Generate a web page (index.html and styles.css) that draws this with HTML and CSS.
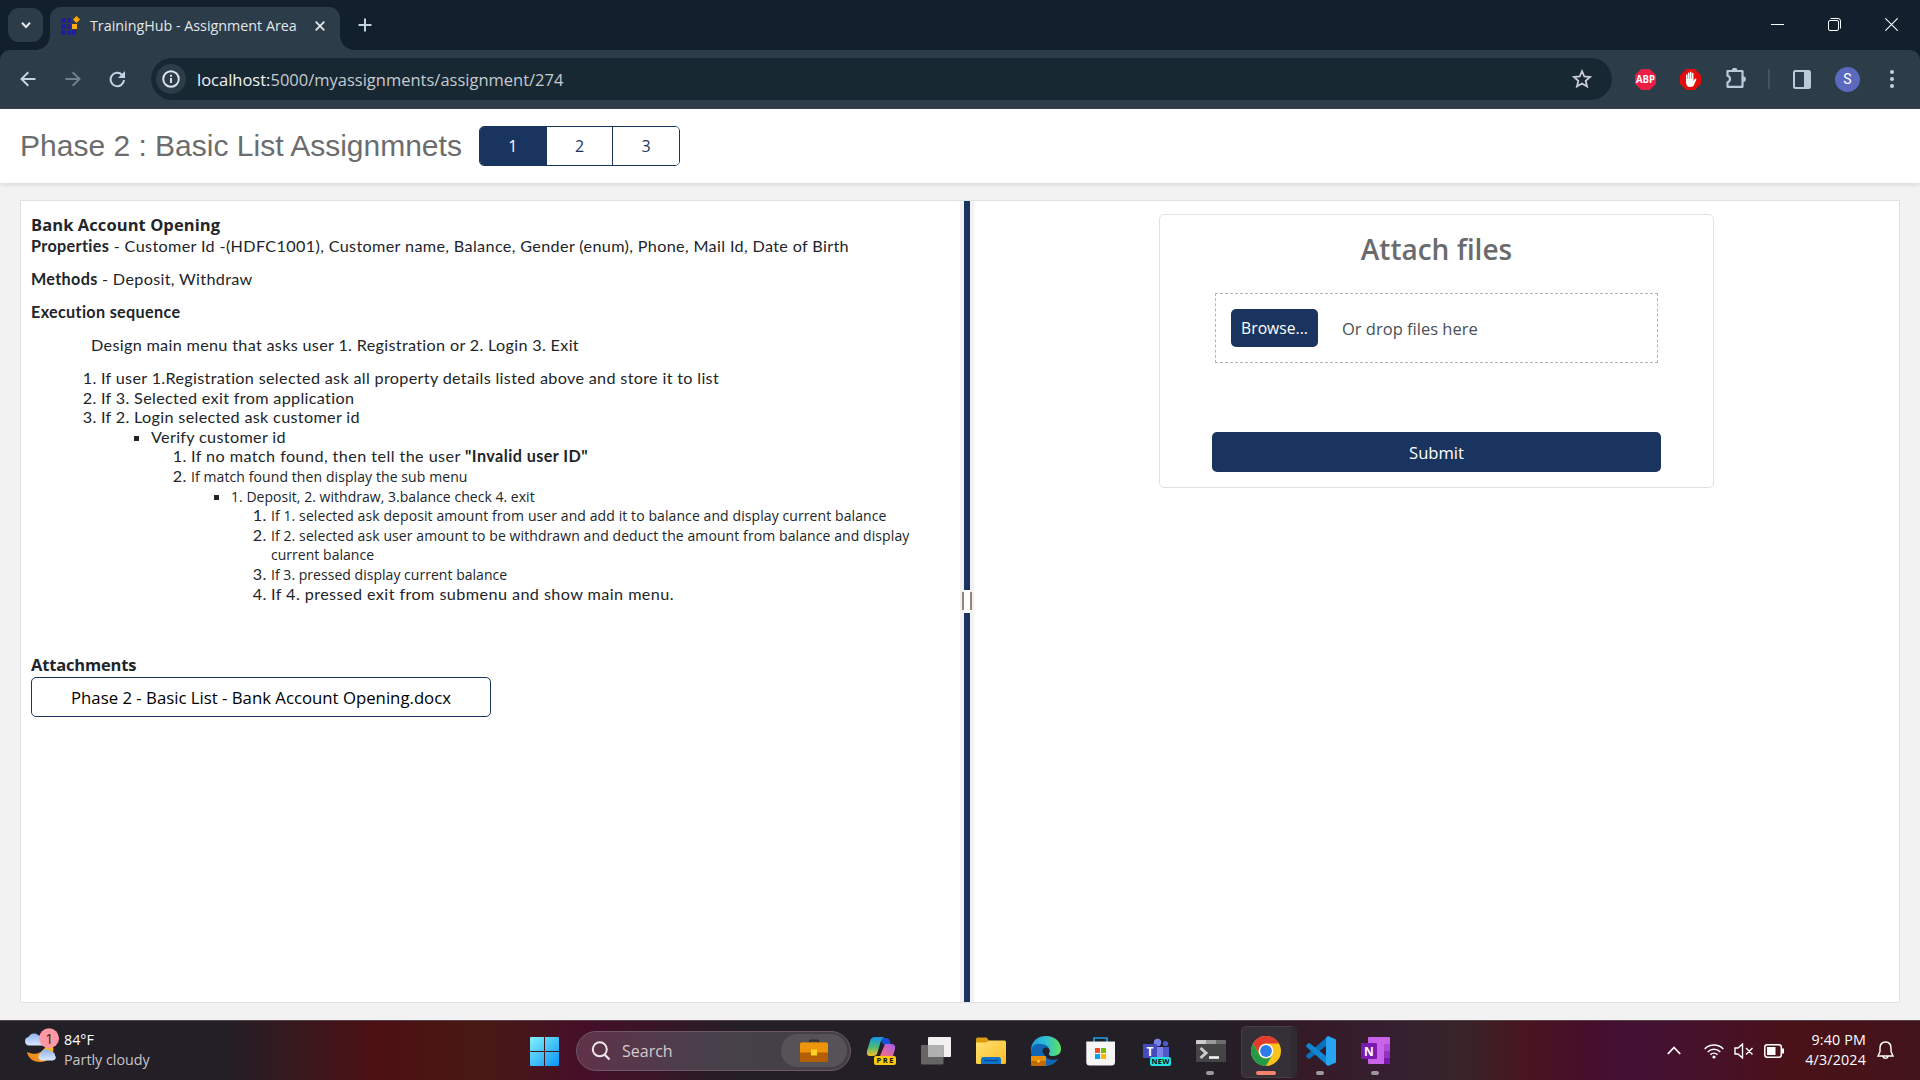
FILE: index.html
```html
<!DOCTYPE html>
<html lang="en">
<head>
<meta charset="utf-8">
<title>TrainingHub - Assignment Area</title>
<link rel="stylesheet" href="styles.css">
</head>
<body>
<div class="screen">
  <header class="tabstrip">
    <button class="tab-search"><svg width="10" height="10" viewBox="0 0 10 10"><path d="M1 2.8 5 7l4-4.2" fill="none" stroke="#e3e8ec" stroke-width="2"/></svg></button>
    <div class="tab">
      <svg class="favicon" width="19" height="19" viewBox="0 0 19 19"><path d="M0 2h5v5H0zM6 2h4v5H6zM0 8h5v5H0zM6 8h4v5H6zM0 14h5v5H0zM6 14h4v5H6zM11 14h4v5h-4z" fill="#232096"/><path d="M11 8h5v5h-5z" fill="#ffa90a"/><path d="m15.500 0 3.500 3.500-3.500 3.500L12 3.500z" fill="#ffa90a"/></svg>
      <span class="tab-title">TrainingHub - Assignment Area</span>
      <svg class="tab-close" width="10" height="10" viewBox="0 0 10 10"><path d="m.7.700 8.600 8.600M9.300.7.700 9.300" stroke="#e6eaed" stroke-width="1.700"/></svg>
    </div>
    <svg class="new-tab" width="14" height="14" viewBox="0 0 14 14"><path d="M7 .5v13M.5 7h13" stroke="#c3d3e3" stroke-width="2"/></svg>
    <div class="window-controls">
      <svg width="13" height="13" viewBox="0 0 13 13"><path d="M0 6.500h13" stroke="#fff"/></svg>
      <svg width="13" height="13" viewBox="0 0 13 13" fill="none" stroke="#fff"><rect x=".5" y="2.500" width="10" height="10" rx="1.500"/><path d="M2.500.5H10A2.500 2.500 0 0 1 12.500 3v7.500"/></svg>
      <svg width="13" height="13" viewBox="0 0 13 13"><path d="m.3.300 12.400 12.400M12.700.3.300 12.700" stroke="#fff" stroke-width="1.100"/></svg>
    </div>
  </header>

  <nav class="toolbar">
    <svg class="back" width="16" height="16" viewBox="0 0 16 16" fill="none" stroke="#c3d3e3" stroke-width="2"><path d="M15.500 8H2M8.300 1.200 1.500 8l6.800 6.800"/></svg>
    <svg class="forward" width="16" height="16" viewBox="0 0 16 16" fill="none" stroke="#73818c" stroke-width="2"><path d="M.5 8H14M7.700 1.200 14.500 8l-6.800 6.800"/></svg>
    <svg class="reload" width="17" height="17" viewBox="0 0 17 17"><path d="M15 9a6.700 6.700 0 1 1-2-5.300L15 5.700" fill="none" stroke="#c3d3e3" stroke-width="2"/><path d="M16 0v7H9z" fill="#c3d3e3"/></svg>
    <div class="omnibox">
      <span class="site-info"><svg width="18" height="18" viewBox="0 0 18 18"><circle cx="9" cy="9" r="7.800" fill="none" stroke="#dfe5ea" stroke-width="1.900"/><path d="M9 8v5M9 4.700v2" stroke="#dfe5ea" stroke-width="1.900"/></svg></span>
      <span class="url"><b>localhost:</b>5000/myassignments/assignment/274</span>
      <svg class="star" width="20" height="20" viewBox="0 0 20 20"><path d="m10 2.200 2.300 5.300 5.700.5-4.300 3.800 1.300 5.700-5-3-5 3 1.300-5.700L2 8l5.700-.5z" fill="none" stroke="#c8ced3" stroke-width="1.800"/></svg>
    </div>
    <div class="extensions">
      <svg class="abp" width="21" height="21" viewBox="0 0 21 21"><path d="M6.300 0h8.400L21 6.300v8.400L14.700 21H6.300L0 14.700V6.300z" fill="#ed1e45"/><text x="10.500" y="14" text-anchor="middle" textLength="19" lengthAdjust="spacingAndGlyphs" class="abp-text">ABP</text></svg>
      <svg class="block" width="21" height="21" viewBox="0 0 21 21"><path d="M6.300 0h8.400L21 6.300v8.400L14.700 21H6.300L0 14.700V6.300z" fill="#e40d0d"/><path d="M6 12V6.200c0-1.300 1.500-1.300 1.500 0V10h.4V4.500c0-1.400 1.600-1.400 1.600 0V10h.4V3.500c0-1.300 1.600-1.300 1.600 0V10h.4V4.700c0-1.300 1.600-1.300 1.600 0V12l1.200-2c.7-1 2-.5 1.500.7l-2 4.800c-.7 1.800-1.800 2.500-4 2.500-3 0-4.200-1.700-4.200-6" fill="#fff"/></svg>
      <svg class="puzzle" width="22" height="22" viewBox="0 0 22 22"><path d="M2.500 3h15v15.800h-15v-4.600a3.300 3.300 0 0 0 0-6.400z" fill="none" stroke="#b9cadb" stroke-width="2.200" stroke-linejoin="round"/><path d="M6.800 2.500a2.800 2.800 0 0 1 5.600 0zM18 8.200a2.900 2.900 0 0 1 0 5.800z" fill="#b9cadb"/></svg>
      <i class="divider"></i>
      <svg class="panel-icon" width="18" height="19" viewBox="0 0 18 19"><rect x="1" y="1" width="16" height="17" rx="1.500" fill="none" stroke="#b9cadb" stroke-width="2"/><path d="M11 1h6v17h-6z" fill="#b9cadb"/></svg>
      <span class="avatar">S</span>
      <svg class="menu" width="4" height="18" viewBox="0 0 4 18" fill="#c3d3e3"><circle cx="2" cy="2" r="2"/><circle cx="2" cy="9" r="2"/><circle cx="2" cy="16" r="2"/></svg>
    </div>
  </nav>

  <section class="page-head">
    <h1>Phase 2 : Basic List Assignmnets</h1>
    <div class="pager"><button class="active">1</button><button>2</button><button>3</button></div>
  </section>

  <main class="content">
    <div class="panels">
      <article class="task">
        <h2>Bank Account Opening</h2>
        <p class="properties"><b>Properties</b> - Customer Id -(HDFC1001), Customer name, Balance, Gender (enum), Phone, Mail Id, Date of Birth</p>
        <p><b>Methods</b> - Deposit, Withdraw</p>
        <p><b>Execution sequence</b></p>
        <p class="indent">Design main menu that asks user 1. Registration or 2. Login 3. Exit</p>
        <ol class="steps">
          <li>If user 1.Registration selected ask all property details listed above and store it to list</li>
          <li>If 3. Selected exit from application</li>
          <li>If 2. Login selected ask customer id
            <ul class="sub">
              <li>Verify customer id
                <ol>
                  <li><span class="wide">If no match found, then tell the user <b>"Invalid user ID"</b></span></li>
                  <li><span class="ui">If match found then display the sub menu</span>
                    <ul>
                      <li><span class="ui tight">1. Deposit, 2. withdraw, 3.balance check 4. exit</span>
                        <ol>
                          <li><span class="ui">If 1. selected ask deposit amount from user and add it to balance and display current balance</span></li>
                          <li><span class="ui">If 2. selected ask user amount to be withdrawn and deduct the amount from balance and display</span><br><span class="ui tight">current balance</span></li>
                          <li><span class="ui tight">If 3. pressed display current balance</span></li>
                          <li><span class="wide">If 4. pressed exit from submenu and show main menu.</span></li>
                        </ol>
                      </li>
                    </ul>
                  </li>
                </ol>
              </li>
            </ul>
          </li>
        </ol>
        <h2 class="attachments">Attachments</h2>
        <button class="file">Phase 2 - Basic List - Bank Account Opening.docx</button>
      </article>
      <div class="splitter"><i></i><span class="grip"></span><i></i></div>
      <section class="upload">
        <form class="card">
          <h3>Attach files</h3>
          <div class="dropzone"><button type="button" class="browse">Browse...</button><span class="hint">Or drop files here</span></div>
          <button type="button" class="submit">Submit</button>
        </form>
      </section>
    </div>
  </main>

  <footer class="taskbar">
    <div class="weather">
      <svg width="34" height="36" viewBox="0 0 34 36">
        <defs><linearGradient id="cl" x2="0" y2="1"><stop stop-color="#8db4f2"/><stop offset="1" stop-color="#d9e7fc"/></linearGradient><linearGradient id="mn" x1="1" x2="0" y2="1"><stop stop-color="#fbc02a"/><stop offset="1" stop-color="#ec7a1a"/></linearGradient></defs>
        <path d="M28 18c2 9-4 16-13 16C8 34 3 30 2 24c9 4 15 1 19-6z" fill="url(#mn)"/>
        <path d="M4 17.500a4.300 4.300 0 0 1-.5-8.500 6 6 0 0 1 10-1.500c4 0 6 3 5 10z" fill="url(#cl)"/>
        <path d="M16 32.500a4 4 0 0 1 0-7.500 5.500 5.500 0 0 1 10-1c3-.3 4 1 4 3.500 2 2 0 5-2.500 5z" fill="url(#cl)"/>
        <circle cx="24" cy="10.300" r="10" fill="#ff98a4"/><text x="24.200" y="15.500" text-anchor="middle" class="badge">1</text>
      </svg>
      <p>84°F<br><span class="dim">Partly cloudy</span></p>
    </div>
    <div class="apps">
      <span class="app"><svg width="30" height="30" viewBox="0 0 30 30"><defs><linearGradient id="w" x2="1" y2="1"><stop stop-color="#80f2fc"/><stop offset="1" stop-color="#0a94f8"/></linearGradient></defs><path d="M0 2q0-1 1-1h13v14H0zM15 1h13q1 0 1 1v13H15zM0 16h14v14H1q-1 0-1-1zM15 16h14v13q0 1-1 1H15z" fill="url(#w)"/></svg></span>
      <div class="search">
        <svg width="20" height="20" viewBox="0 0 20 20"><circle cx="8.800" cy="8.300" r="7" fill="none" stroke="#efe7eb" stroke-width="2"/><path d="m13.500 13.500 5 5" stroke="#efe7eb" stroke-width="2.400"/></svg>
        <span class="search-label">Search</span>
        <span class="brief"><svg width="28" height="24" viewBox="0 0 28 24"><path d="M10 4V2.500q0-1 1-1h6q1 0 1 1V4" fill="none" stroke="#2e2e30" stroke-width="2"/><rect y="3.500" width="28" height="19.500" rx="1.500" fill="#b45f04"/><path d="M0 5q0-1.500 1.500-1.500h25Q28 3.500 28 5v8.500H0z" fill="#ee9408"/><path d="M11 10.500h6v6h-6z" fill="#fcd226"/></svg></span>
      </div>
      <span class="app"><svg width="30" height="30" viewBox="0 0 30 30"><defs><linearGradient id="c1" x2="0" y2="1"><stop stop-color="#1594e8"/><stop offset=".5" stop-color="#45b97c"/><stop offset="1" stop-color="#f5c01f"/></linearGradient><linearGradient id="c2" x1="1" x2="0" y2="1"><stop stop-color="#a45cf2"/><stop offset="1" stop-color="#fb7076"/></linearGradient></defs><path d="M13 2h7q3 0 4 3l1 4h-7z" fill="#1a50d8"/><path d="M9 1h9q-3 2-4 7l-3 10q-1 2-4 2H4q-4 0-3-5L4 5q1-4 5-4" fill="url(#c1)"/><path d="M19 8h6q5 0 4 5l-2 7H14z" fill="url(#c2)"/><rect x="8" y="20" width="22" height="9" rx="2" fill="#fdc810"/><text x="19" y="27.400" text-anchor="middle" textLength="17" class="tag">PRE</text></svg></span>
      <span class="app"><svg width="32" height="30" viewBox="0 0 32 30"><rect x="8" y="1" width="23" height="20" rx="1" fill="#f0f0f0"/><rect x="1" y="9" width="22.500" height="19.500" rx="1" fill="#656565"/><path d="M8 9h15.500v12H8z" fill="#b0b0b0"/></svg></span>
      <span class="app"><svg width="30" height="30" viewBox="0 0 30 30"><defs><linearGradient id="f" x2="1" y2="1"><stop stop-color="#ffe070"/><stop offset="1" stop-color="#fdbd28"/></linearGradient></defs><path d="M0 3q0-1.500 1.500-1.500h9L13 4.500V9H0z" fill="#dc9b0c"/><path d="M0 6.500h10.500L13 4.500h15.500Q30 4.500 30 6v20.500q0 1.500-1.500 1.500h-27Q0 28 0 26.500z" fill="url(#f)"/><path d="M5 28v-4.500q0-2.500 2.500-2.500h15q2.500 0 2.500 2.500V28z" fill="#0d74c8"/><path d="M8 24.500h14" stroke="#0a4f94" stroke-width="1.500"/></svg></span>
      <span class="app"><svg width="30" height="30" viewBox="0 0 30 30"><defs><linearGradient id="e" x2="1"><stop stop-color="#1f9fe0"/><stop offset=".5" stop-color="#2fc0d5"/><stop offset="1" stop-color="#5fe25b"/></linearGradient></defs><path d="M0 17C-1 6 6 0 15 0c10 0 15 7 15 13 0 5-4 7-8 7-3 0-5-1-4-3 2-4-2-7-6-6-6 1-6 7-12 6" fill="url(#e)"/><path d="M0 15c1-6 5-8 10-7 5 0 8 3 8 5-3-2-6 1-5 4 1 6 8 8 14 6-3 5-8 7-13 7C6 30 0 24 0 15" fill="#1267b5"/><circle cx="15" cy="15" r="3.500" fill="#23202a"/><rect y="20" width="15" height="10" rx=".8" fill="#c26b05"/><path d="M0 20h15v5H0z" fill="#e88e0b"/><circle cx="7.500" cy="25.200" r="1.300" fill="#fcd226"/></svg></span>
      <span class="app"><svg width="30" height="30" viewBox="0 0 30 30"><path d="M8 7V2h13v5" fill="none" stroke="#1f9fe6" stroke-width="1.700"/><path d="M.3 5.500H29V26q0 3.500-3.500 3.500h-22Q.3 29.500.3 26z" fill="#f6f6f6"/><path d="M9 12h5v5H9z" fill="#f04e24"/><path d="M15 12h5v5h-5z" fill="#7db900"/><path d="M9 18h5v5H9z" fill="#06a2ec"/><path d="M15 18h5v5h-5z" fill="#fdb700"/></svg></span>
      <span class="app"><svg width="30" height="30" viewBox="0 0 30 30"><circle cx="16.500" cy="6.500" r="3.700" fill="#7b83eb"/><circle cx="24.500" cy="7.500" r="2.600" fill="#5059c9"/><path d="M13 11h11v13H13z" fill="#7b83eb"/><path d="M22 11h6v11h-6z" fill="#5059c9"/><rect x="2" y="8" width="14" height="14" rx="1" fill="#444bbf"/><text x="9" y="19.500" text-anchor="middle" class="letter">T</text><rect x="9" y="21" width="21" height="9" rx="2" fill="#25e2e5"/><text x="19.500" y="28.400" text-anchor="middle" textLength="18" class="tag">NEW</text></svg></span>
      <span class="app running"><svg width="30" height="30" viewBox="0 0 30 30"><rect y="4" width="30" height="22" rx="1" fill="#454545"/><path d="M0 8V5q0-1 1-1h9v4z" fill="#cbcbcb"/><path d="M10 4h10v4H10z" fill="#999"/><path d="M20 4h9q1 0 1 1v3H20z" fill="#6d6d6d"/><path d="m4.500 12 5.500 5-5.500 5" fill="none" stroke="#ccc" stroke-width="3"/><path d="M13 21.500h10" stroke="#f4f4f4" stroke-width="2.600"/></svg></span>
      <span class="app current"><svg width="30" height="30" viewBox="0 0 30 30"><circle cx="15" cy="15" r="15" fill="#fcc31d"/><path d="M2 7.500A15 15 0 0 1 28 7.500H15A7.500 7.500 0 0 0 8.500 18.700z" fill="#e33b2e"/><path d="M2 7.500 8.500 18.700A7.500 7.500 0 0 0 21.500 18.700L15 30A15 15 0 0 1 2 7.500" fill="#259b4a"/><circle cx="15" cy="15" r="7.300" fill="#fff"/><circle cx="15" cy="15" r="5.900" fill="#2f7be9"/></svg></span>
      <span class="app running"><svg width="30" height="30" viewBox="0 0 30 30"><path d="M22 0v8.500L4 22.500q-1 .8-2 0L.5 21q-1-1 0-2z" fill="#0a6fb9"/><path d="M22 30v-8.500L4 7.500q-1-.8-2 0L.5 9q-1 1 0 2z" fill="#1186cf"/><path d="M22 0 30 3.500v23L22 30q-2-1-2-3V3q0-2 2-3" fill="#27a5f0"/></svg></span>
      <span class="app running"><svg width="30" height="30" viewBox="0 0 30 30"><rect x="7" y="1" width="22" height="27" rx="1" fill="#c964e8"/><path d="M23 8h6v7h-6z" fill="#ae4bd5"/><path d="M23 15h6v7h-6z" fill="#9332bf"/><path d="M23 22h6v5q0 1-1 1h-5z" fill="#7719aa"/><rect y="7" width="16" height="16" rx="1.200" fill="#7a1ab0"/><text x="8" y="19.500" text-anchor="middle" class="letter">N</text></svg></span>
    </div>
    <div class="tray">
      <svg class="up" width="14" height="9" viewBox="0 0 14 9"><path d="m.8 8 6.200-6.500L13.200 8" fill="none" stroke="#fff" stroke-width="1.800"/></svg>
      <svg class="wifi" width="20" height="16" viewBox="0 0 20 16" fill="none" stroke="#fff" stroke-width="1.500"><path d="M.7 6a13 13 0 0 1 18.600 0M3.700 9a8.800 8.800 0 0 1 12.600 0M6.500 11.600a5 5 0 0 1 7 0"/><circle cx="10" cy="14" r="1.600" fill="#fff" stroke="none"/></svg>
      <svg class="mute" width="20" height="16" viewBox="0 0 20 16" fill="none" stroke="#fff" stroke-width="1.400"><path d="M1 5h3l4.500-4v14L4 11H1zM12 5l6.500 6.500M18.500 5 12 11.500"/></svg>
      <svg class="battery" width="20" height="14" viewBox="0 0 20 14"><rect x=".8" y=".8" width="16.500" height="12.400" rx="2.500" fill="none" stroke="#fff" stroke-width="1.500"/><path d="M3 3h8.500v8H3zM18 4.500h2v5h-2z" fill="#fff"/></svg>
      <p class="clock">9:40 PM<br>4/3/2024</p>
      <svg class="bell" width="17" height="19" viewBox="0 0 17 19" fill="none" stroke="#fff" stroke-width="1.400"><path d="M8.500 1C5 1 3 3.500 3 7v3.500L1 15h15l-2-4.500V7c0-3.500-2-6-5.500-6zM6 15.500a2.600 2.600 0 0 0 5 0"/></svg>
    </div>
  </footer>
</div>
</body>
</html>
```
FILE: styles.css
```css
* { box-sizing: border-box; }
body { margin: 0; font-family: "Open Sans", "Noto Sans", sans-serif; font-size: 15px; color: #212529; }
button { margin: 0; padding: 0; font: inherit; border: 0; }
h1, h2, h3, p, ol, ul { margin: 0; padding: 0; }
svg { display: block; flex: none; }
.screen { width: 1920px; height: 1080px; overflow: hidden; display: flex; flex-direction: column; background: #f2f2f2; white-space: nowrap; }

/* Browser tab strip */
.tabstrip { position: relative; z-index: 1; flex: none; height: 50px; display: flex; background: #11202c; padding-left: 8px; }
.tab-search { width: 35px; height: 34px; margin-top: 8px; border-radius: 11px; background: #2c3c49; display: flex; align-items: center; justify-content: center; }
.tab { position: relative; width: 290px; margin: 7px 0 0 7px; padding: 0 15px 6px 11px; border-radius: 11px 11px 0 0; background: #2c3c49; display: flex; align-items: center; color: #e2e7ea; }
.tab::before, .tab::after { content: ""; position: absolute; bottom: 0; width: 14px; height: 14px; }
.tab::before { left: -14px; background: radial-gradient(circle at 0 0, transparent 13.500px, #2c3c49 14px); }
.tab::after { right: -14px; background: radial-gradient(circle at 100% 0, transparent 13.500px, #2c3c49 14px); }
.tab-title { margin-left: 10px; font-size: 14.300px; }
.tab-close { margin-left: auto; }
.new-tab { margin: 18px 0 0 18px; }
.window-controls { margin: 18px 22px 0 auto; display: flex; gap: 44px; }

/* Browser toolbar */
.toolbar { flex: none; height: 59px; display: flex; align-items: center; background: #2c3c49; border-bottom: 1px solid #3a3f4a; border-radius: 10px 10px 0 0; padding-left: 20px; box-shadow: 0 -10px 0 #11202c; position: relative; z-index: 0; }
.forward { margin-left: 29px; }
.reload { margin-left: 28px; }
.omnibox { width: 1461px; height: 42px; margin-left: 25px; padding: 0 20px 0 5px; border-radius: 21px; background: #182833; display: flex; align-items: center; }
.site-info { width: 30px; height: 30px; border-radius: 50%; background: #2c3c49; display: grid; place-items: center; }
.url { margin-left: 11px; font-size: 16.500px; color: #c5cbd0; }
.url b { font-weight: 400; color: #eef1f3; }
.star { margin-left: auto; }
.extensions { display: flex; align-items: center; margin-left: 23px; }
.abp-text { font: bold 10px "Open Sans", sans-serif; fill: #fff; }
.block { margin-left: 24px; }
.puzzle { margin-left: 24px; }
.divider { width: 2px; height: 20px; margin-left: 21px; background: #44545f; }
.panel-icon { margin-left: 23px; }
.avatar { width: 25px; height: 25px; margin-left: 24px; border-radius: 50%; background: #5b69bf; color: #fff; font: 14px/25px Roboto, sans-serif; text-align: center; }
.menu { margin-left: 30px; }

/* Page heading */
.page-head { flex: none; height: 74px; display: flex; align-items: center; padding-left: 20px; background: #fff; box-shadow: 0 2px 4px rgba(0, 0, 0, .1); }
h1 { width: 441px; font: 400 30px "Liberation Sans", sans-serif; color: #6b6c6e; }
.pager { display: flex; margin-left: 18px; width: 201px; height: 40px; border: 1px solid #19355f; border-radius: 5px; overflow: hidden; }
.pager button { flex: 1; background: #fff; color: #19355f; border-left: 1px solid #19355f; font-size: 16px; }
.pager button:first-child { border-left: 0; }
.pager .active { background: #19355f; color: #fff; }

/* Assignment text */
.content { flex: 1; padding: 17px 20px; }
.panels { height: 803px; display: flex; border: 1px solid #dee2e6; background: #fff; }
.task { width: 939px; padding: 11px 0 0 10px; font-family: Lato, sans-serif; font-size: 16.200px; letter-spacing: .32px; }
.task h2 { margin-bottom: -1px; font: 700 16.500px/25px "Open Sans", sans-serif; letter-spacing: .08px; }
.task p { line-height: 19px; margin-bottom: 14px; }
.task .properties { letter-spacing: .35px; }
.task .indent { padding-left: 60px; }
.task ol, .task ul { line-height: 19.600px; padding-left: 40px; }
.task ol { list-style: decimal; }
.task ul { list-style: square; }
.task .steps { padding-left: 70px; }
.task .sub { padding-left: 50px; }
.wide { letter-spacing: .42px; }
.ui { font: 14px/1 "Open Sans", sans-serif; letter-spacing: .09px; }
.tight { letter-spacing: .03px; }
.task .attachments { margin: 49px 0 0; letter-spacing: -.18px; }
.file { display: block; width: 460px; height: 40px; border: 1px solid #19355f; border-radius: 5px; background: #fff; color: #000; font: 16.750px "Open Sans", sans-serif; letter-spacing: 0; }

/* Draggable divider */
.splitter { width: 14px; background: #f2f2f2; display: flex; flex-direction: column; align-items: center; }
.splitter i { width: 6px; height: 389px; background: #19355f; }
.grip { width: 14px; height: 23px; background: linear-gradient(#9a8373, #9a8373) 2px 2px / 2px 18px no-repeat, linear-gradient(#9a8373, #9a8373) 10px 2px / 2px 18px no-repeat, linear-gradient(#fff, #fff) 4px 0 / 6px 23px no-repeat; }

/* Upload form */
.upload { flex: 1; padding: 13px 0 0 185px; }
.card { width: 555px; height: 274px; border: 1px solid #dee2e6; border-radius: 5px; display: flex; flex-direction: column; align-items: center; }
h3 { margin-top: 13px; font-size: 28px; line-height: 42px; font-weight: 600; color: #6a6b6d; }
.dropzone { width: 443px; height: 70px; margin-top: 23px; padding-left: 15px; border: 1px dashed #adb5bd; display: flex; align-items: center; font-size: 16px; }
.browse, .submit { background: #19355f; color: #fff; border-radius: 5px; }
.browse { width: 87px; height: 38px; font-size: 15.700px; }
.hint { margin-left: 24px; font-size: 16.500px; color: #495057; }
.submit { width: 449px; height: 40px; margin-top: 69px; font-size: 16.600px; }

/* Taskbar */
.taskbar { flex: none; height: 60px; border-top: 1px solid #55454d; display: flex; align-items: center; color: #fff; font-size: 14.300px; background: linear-gradient(90deg, #231f26 0, #241f26 225px, #4d1013 375px, #481913 480px, #450f29 590px, #3c1427 640px, #241f26 740px, #231f26 1210px, #351a27 1310px, #352031 1400px, #382427 1465px, #4a1420 1530px, #450f2c 1590px, #441136 1640px, #4a1118 1790px, #42141a 1920px); }
.weather { width: 517px; display: flex; align-items: center; padding-left: 25px; }
.weather svg { margin-bottom: 10px; }
.weather p { margin: 0 0 1px 5px; line-height: 20px; }
.dim { color: #c9c5c9; }
.badge { font: 14px "Open Sans", sans-serif; fill: #3a1a1e; }
.apps { display: flex; align-items: center; }
.app { position: relative; width: 55px; height: 50px; display: flex; align-items: center; justify-content: center; }
.running::after, .current::after { content: ""; position: absolute; left: 23px; bottom: 1px; width: 8px; height: 4px; border-radius: 2px; background: #9c979c; }
.current::before { content: ""; position: absolute; left: 3px; top: 0; width: 49px; height: 50px; border-radius: 5px; background: #352f37; border: 1px solid #443e45; border-right-width: 6px; border-right-color: #302a31; }
.current svg { position: relative; }
.current::after { left: 18px; width: 20px; background: #f4836b; }
.search { width: 275px; height: 40px; margin: 0 2px 0 4px; border: 1px solid #6d5965; border-radius: 20px; display: flex; align-items: center; padding: 0 3px 0 14px; background: linear-gradient(90deg, #60324a, #47404a 50%, #434045); }
.search-label { margin-left: 11px; font-size: 16px; color: #d5c9d0; }
.brief { width: 66px; height: 33px; margin-left: auto; border-radius: 17px; background: #565358; display: grid; place-items: center; }
.tag { font: bold 7.500px "Open Sans", sans-serif; fill: #111; }
.letter { font: bold 12px "Open Sans", sans-serif; fill: #fff; }
.tray { margin: 0 26px 0 auto; display: flex; align-items: center; }
.wifi { margin-left: 23px; }
.mute { margin-left: 10px; }
.battery { margin-left: 10px; }
.clock { width: 82px; margin-bottom: 2px; text-align: right; line-height: 20px; letter-spacing: .15px; }
.bell { margin-left: 11px; }
```
